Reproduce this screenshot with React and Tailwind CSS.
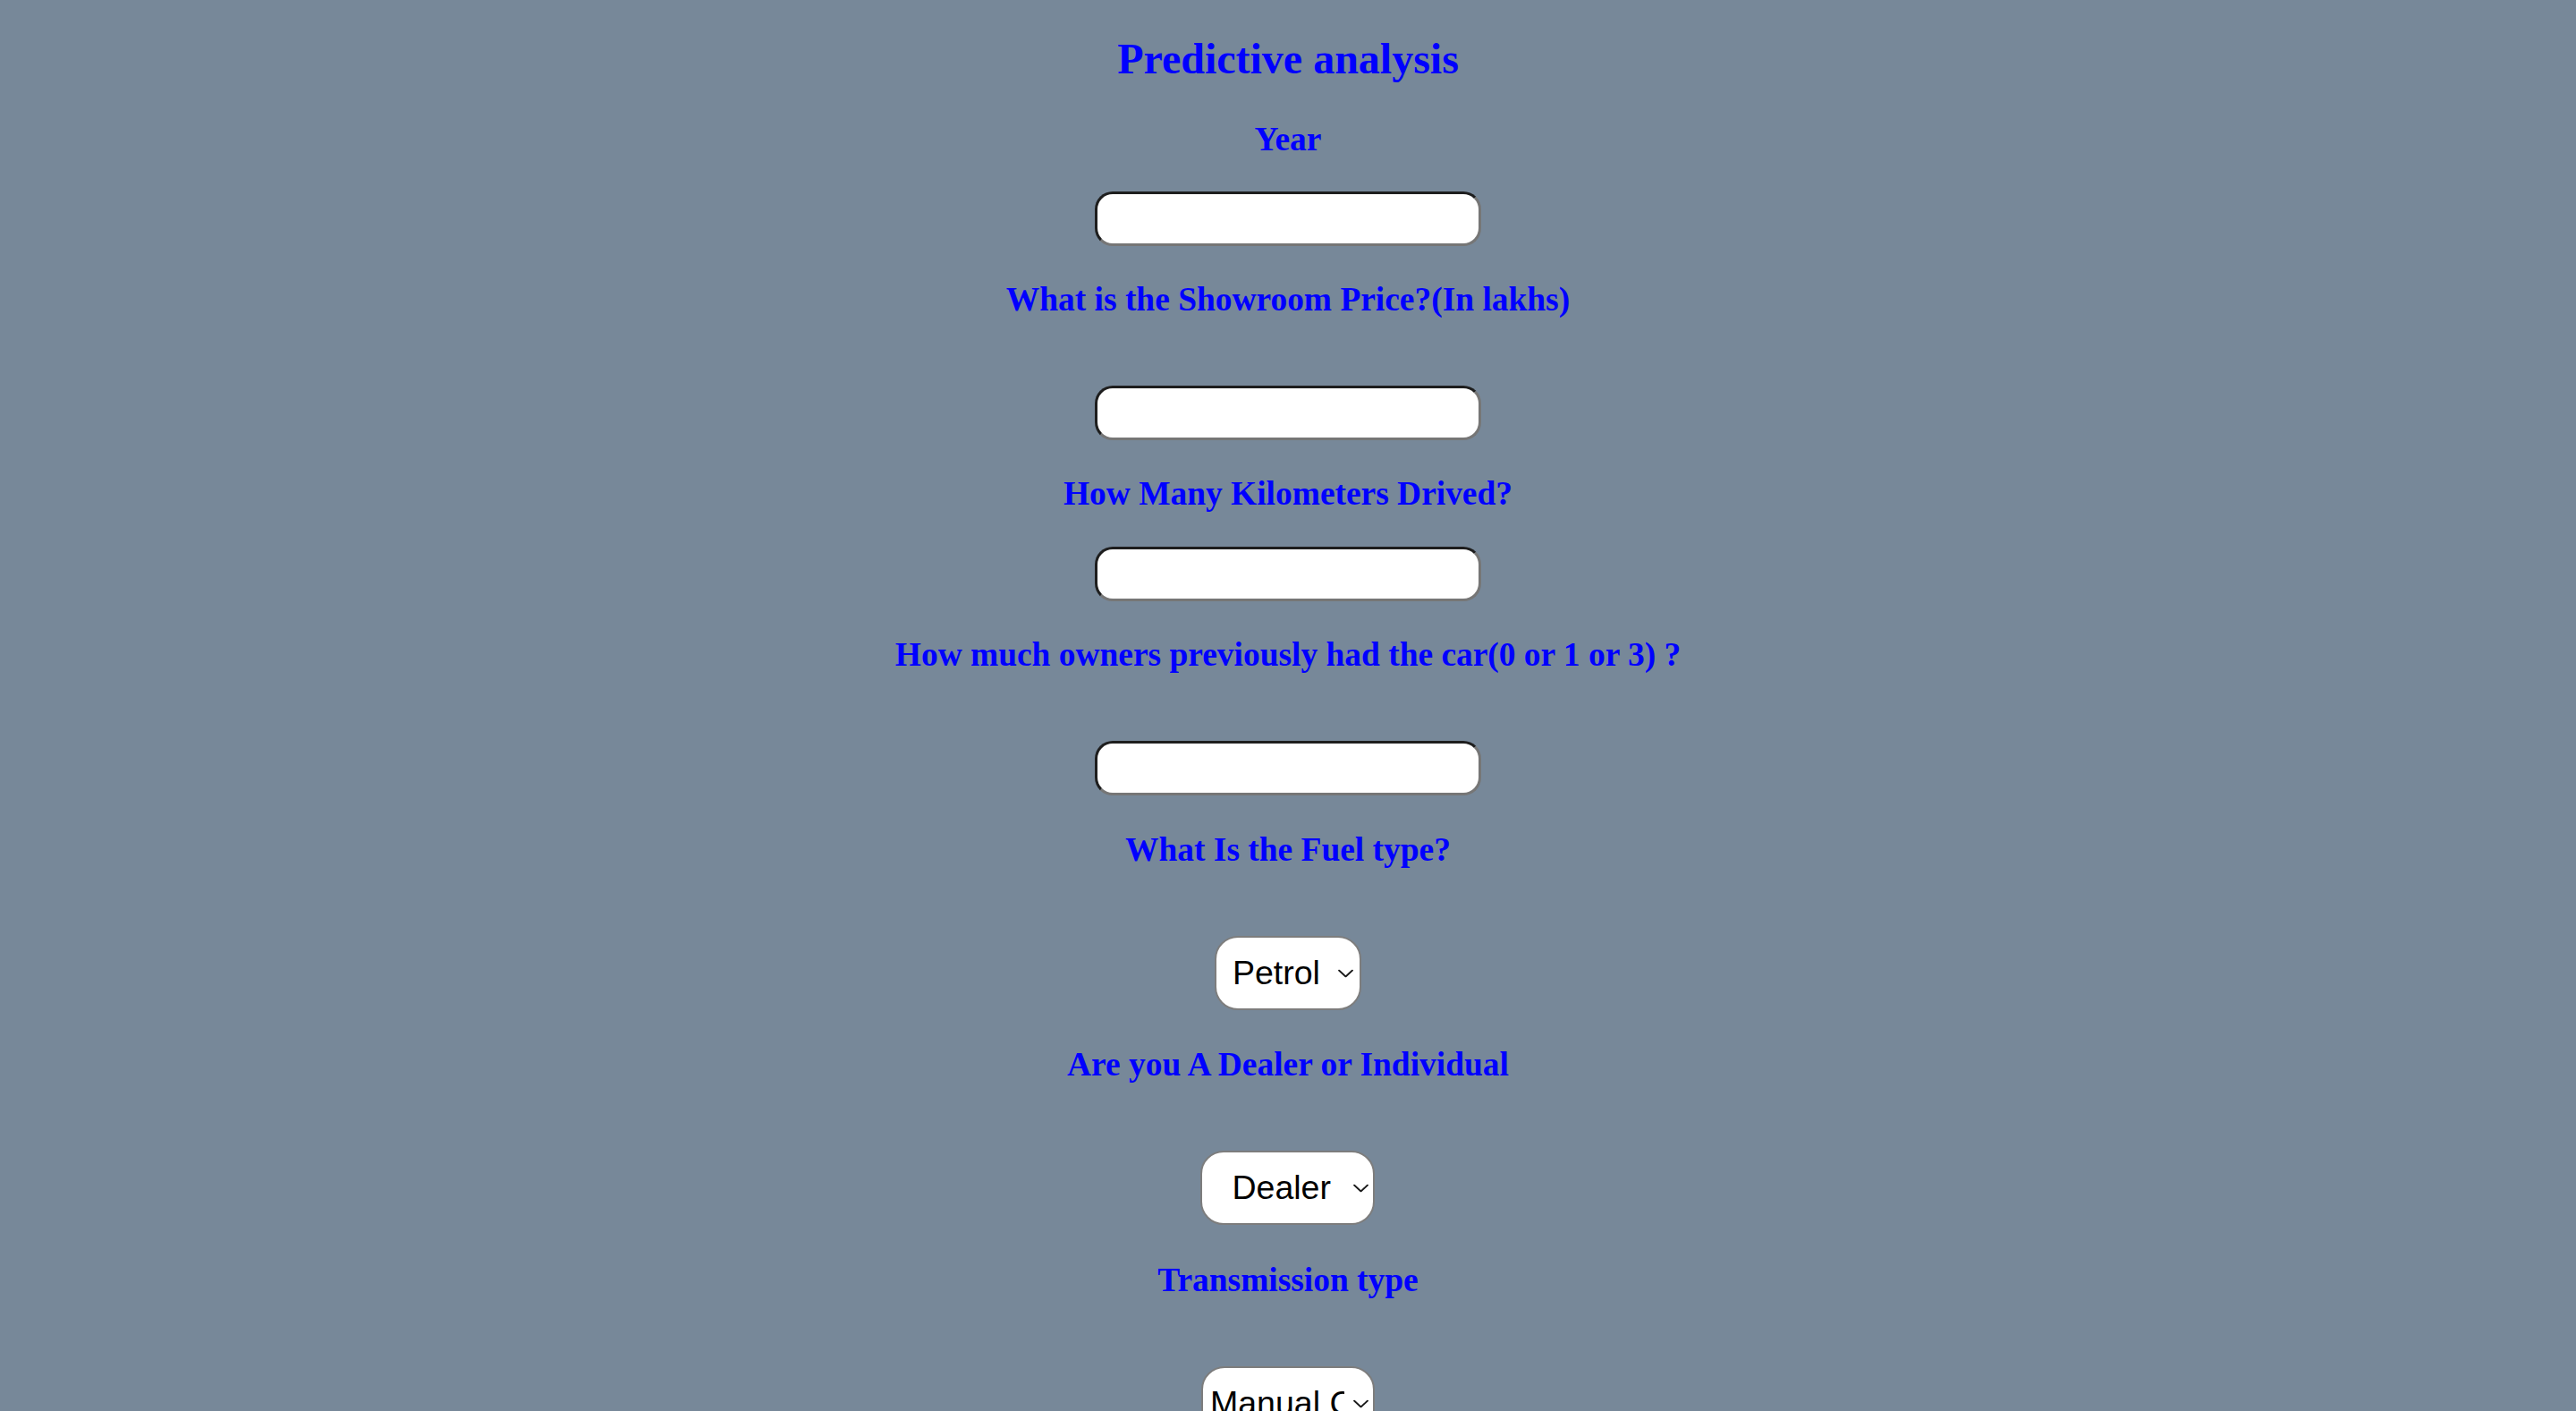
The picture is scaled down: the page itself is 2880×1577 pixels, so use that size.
import React from "react";

function Chevron({ right }) {
  return (
    <svg
      className={`pointer-events-none absolute top-1/2 -translate-y-1/2 ${right}`}
      width="17"
      height="9"
      viewBox="0 0 17 9"
      fill="none"
    >
      <polyline points="1,1 8.5,8 16,1" stroke="#1a1a1a" strokeWidth="1.8" strokeLinecap="round" strokeLinejoin="round" />
    </svg>
  );
}

const labelCls =
  "m-0 text-center text-[37.44px] leading-[44px] font-bold text-[#0000ff] font-['Liberation_Serif','Times_New_Roman',serif]";
const inputCls =
  "block w-[432px] h-[61px] rounded-[20px] bg-white border-[3px] border-solid border-t-[#1e1e1e] border-l-[#1e1e1e] border-r-[#767676] border-b-[#767676] px-4 outline-none";
const selectCls =
  "appearance-none block h-[83px] rounded-[26px] bg-white border-2 border-solid border-[#7d7d7d] text-black text-[37.5px] leading-[79px] py-0 font-['Liberation_Sans',Arial,sans-serif] outline-none overflow-hidden whitespace-nowrap";

export default function App() {
  return (
    <div className="min-h-screen w-full bg-[#778899] flex flex-col items-center pt-[38px] pb-[60px] font-['Liberation_Serif','Times_New_Roman',serif]">
      <h1 className="m-0 text-[48px] leading-[56px] font-bold text-[#0000ff]">Predictive analysis</h1>

      <form className="flex flex-col items-center">
        <h3 className={`${labelCls} mt-[40px]`}>Year</h3>
        <input type="text" name="Year" className={`${inputCls} mt-[36px]`} />

        <h3 className={`${labelCls} mt-[38px]`}>What is the Showroom Price?(In lakhs)</h3>
        <input type="text" name="Present_Price" className={`${inputCls} mt-[74px]`} />

        <h3 className={`${labelCls} mt-[37.5px]`}>How Many Kilometers Drived?</h3>
        <input type="text" name="Kms_Driven" className={`${inputCls} mt-[37.5px]`} />

        <h3 className={`${labelCls} mt-[37.5px]`}>How much owners previously had the car(0 or 1 or 3) ?</h3>
        <input type="text" name="Owner" className={`${inputCls} mt-[74.5px]`} />

        <h3 className={`${labelCls} mt-[38.5px]`}>What Is the Fuel type?</h3>
        <div className="relative mt-[74.5px]">
          <select className={`${selectCls} w-[164px] pl-[18px] pr-[28px]`} defaultValue="Petrol">
            <option value="Petrol">Petrol</option>
            <option value="Diesel">Diesel</option>
            <option value="CNG">CNG</option>
          </select>
          <Chevron right="right-[9px]" />
        </div>

        <h3 className={`${labelCls} mt-[38.5px]`}>Are you A Dealer or Individual</h3>
        <div className="relative mt-[74.5px]">
          <select className={`${selectCls} w-[195px] pl-[33px] pr-[30px]`} defaultValue="Dealer">
            <option value="Dealer">Dealer</option>
            <option value="Individual">Individual</option>
          </select>
          <Chevron right="right-[7px]" />
        </div>

        <h3 className={`${labelCls} mt-[39.5px]`}>Transmission type</h3>
        <div className="relative mt-[74.5px]">
          <select className={`${selectCls} w-[194px] pl-[8px] pr-[32px]`} defaultValue="Manual Car">
            <option value="Manual Car">Manual Car</option>
            <option value="Automatic Car">Automatic Car</option>
          </select>
          <Chevron right="right-[7px]" />
        </div>
      </form>
    </div>
  );
}
